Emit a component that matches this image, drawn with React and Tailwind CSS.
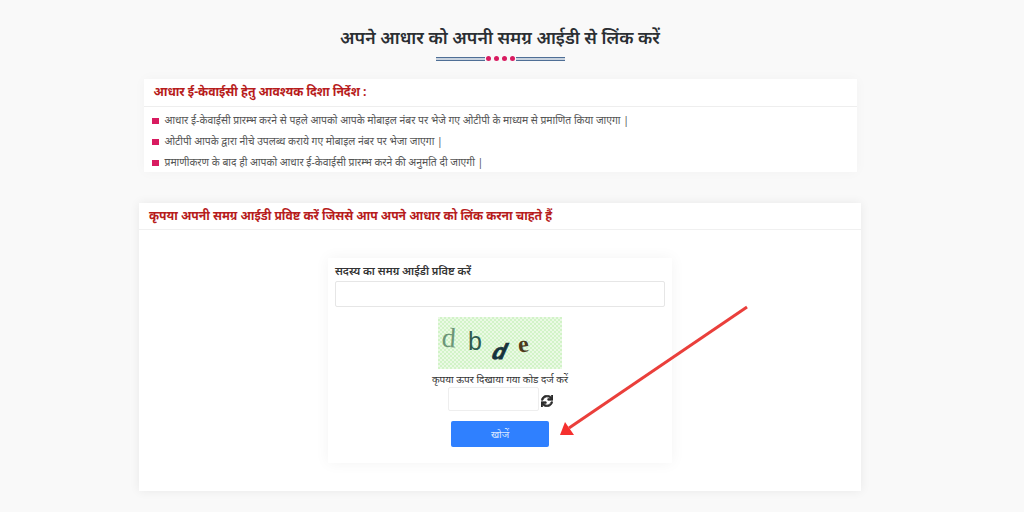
import React from "react";
import { FaSync } from "react-icons/fa";

const notes = [
  "आधार ई-केवाईसी प्रारम्भ करने से पहले आपको आपके मोबाइल नंबर पर भेजे गए ओटीपी के माध्यम से प्रमाणित किया जाएगा |",
  "ओटीपी आपके द्वारा नीचे उपलब्ध कराये गए मोबाइल नंबर पर भेजा जाएगा |",
  "प्रमाणीकरण के बाद ही आपको आधार ई-केवाईसी प्रारम्भ करने की अनुमति दी जाएगी |",
];

function Divider() {
  return (
    <div className="mt-[7px] flex h-[5px] w-[129px] items-center">
      <div className="h-[4px] flex-1 border-y border-[#4f6f96] bg-[#c9d3df]" />
      <div className="flex gap-[3px] px-[1px]">
        <span className="h-[5px] w-[5px] rounded-full bg-[#d81b60]" />
        <span className="h-[5px] w-[5px] rounded-full bg-[#d81b60]" />
        <span className="h-[5px] w-[5px] rounded-full bg-[#d81b60]" />
        <span className="h-[5px] w-[5px] rounded-full bg-[#d81b60]" />
      </div>
      <div className="h-[4px] flex-1 border-y border-[#4f6f96] bg-[#c9d3df]" />
    </div>
  );
}

function Captcha() {
  return (
    <div className="h-[52px] w-[124px] bg-[repeating-conic-gradient(#d2f3c8_0%_25%,#eafae4_0%_50%)] bg-[length:4px_4px]">
      <svg width="124" height="52" viewBox="0 0 124 52">
        <text x="4" y="30" fontFamily="Liberation Serif, serif" fontSize="28" fill="#6d9678" transform="rotate(4 10 20)">d</text>
        <text x="30" y="33" fontFamily="Liberation Sans, sans-serif" fontSize="25" fill="#2f5a50">b</text>
        <text x="0" y="0" fontFamily="Liberation Sans, sans-serif" fontSize="22" fontWeight="700" fill="#16323c" stroke="#16323c" strokeWidth="0.8" transform="translate(52 42) skewX(-24)">d</text>
        <text x="80" y="35" fontFamily="Liberation Serif, serif" fontSize="24" fontWeight="700" fill="#4d3a1c" transform="rotate(-6 85 28)">e</text>
      </svg>
    </div>
  );
}

export default function App() {
  return (
    <div className="relative h-[512px] w-[1024px] overflow-hidden bg-[#f9f9f9] font-['Noto_Sans','Noto_Sans_Devanagari','Lohit_Devanagari','Liberation_Sans',sans-serif]">
      <div className="flex w-[1000px] flex-col items-center">
        <h1 className="mt-[25px] text-[17.7px] leading-[24px] font-semibold text-[#2b2f33]">
          अपने आधार को अपनी समग्र आईडी से लिंक करें
        </h1>
        <Divider />

        <section className="mt-[18px] h-[93px] w-[713px] overflow-hidden bg-white shadow-[0_0_12px_rgba(0,0,0,0.03)]">
          <h2 className="flex h-[28px] items-center border-b border-[#eeeeee] pl-[10px] text-[12.15px] font-bold text-[#b71c1c]">
            आधार ई-केवाईसी हेतु आवश्यक दिशा निर्देश :
          </h2>
          <ul className="flex flex-col gap-[1px] pt-[4px] pl-[8px]">
            {notes.map((n) => (
              <li key={n} className="flex h-[20px] items-center gap-[6px] text-[10.35px] text-[#555555]">
                <span className="h-[6px] w-[7px] bg-[#d81b60]" />
                {n}
              </li>
            ))}
          </ul>
        </section>

        <section className="mt-[31px] flex h-[288px] w-[722px] flex-col bg-white shadow-[0_0_10px_rgba(0,0,0,0.07)]">
          <h2 className="flex h-[27px] shrink-0 items-center border-b border-[#f0f0f0] pl-[10px] text-[12.15px] font-bold text-[#b71c1c]">
            कृपया अपनी समग्र आईडी प्रविष्ट करें जिससे आप अपने आधार को लिंक करना चाहते हैं
          </h2>
          <div className="mt-[28px] ml-[189px] flex h-[205px] w-[344px] flex-col items-center bg-white px-[7px] shadow-[0_0_14px_rgba(0,0,0,0.05)]">
            <label className="mt-[4px] h-[19px] w-full text-[11px] leading-[17px] font-semibold text-[#333333]">
              सदस्य का समग्र आईडी प्रविष्ट करें
            </label>
            <input className="h-[26px] w-full shrink-0 rounded-[2px] border border-[#e6e6e6] bg-white" />
            <div className="mt-[10px]">
              <Captcha />
            </div>
            <div className="mt-[2px] h-[16px] text-[10px] leading-[16px] text-[#333333]">कृपया ऊपर दिखाया गया कोड दर्ज करें</div>
            <div className="flex h-[24px] items-center">
              <input className="h-[24px] w-[91px] rounded-[2px] border border-[#eeeeee] bg-white" />
              <FaSync className="mt-[3px] ml-[2px] text-[12px] text-[#2b2b2b]" stroke="currentColor" strokeWidth={30} />
            </div>
            <button className="mt-[10px] h-[26px] w-[98px] rounded-[2px] bg-[#2f80ff] text-[10px] text-[#dce9ff]">खोजें</button>
          </div>
        </section>
      </div>

      <svg className="absolute top-0 left-0" width="1024" height="512" viewBox="0 0 1024 512">
        <line x1="747" y1="307" x2="569" y2="428" stroke="#ea3f3b" strokeWidth="3" />
        <polygon points="560,435 565,422 574,435" fill="#f5302e" />
      </svg>
    </div>
  );
}
